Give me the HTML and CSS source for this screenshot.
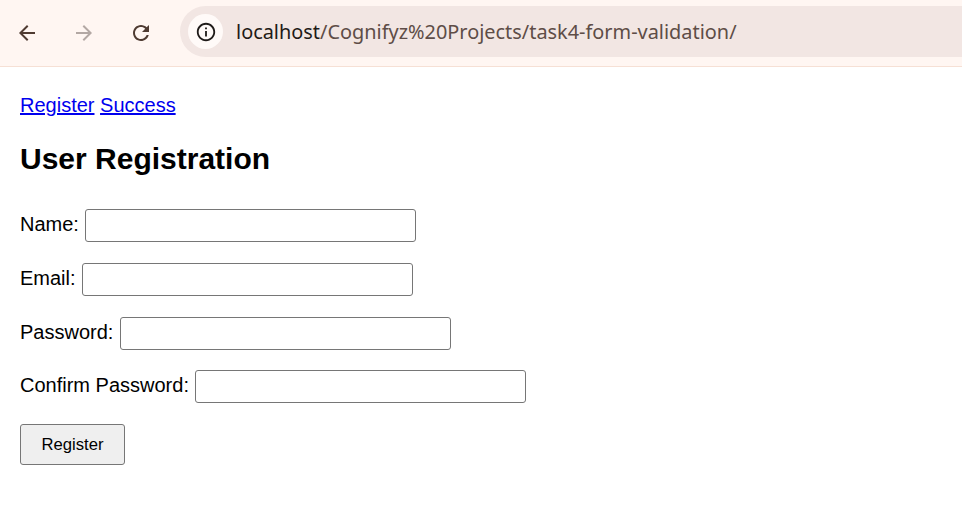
FILE: index.html
```html
<!DOCTYPE html>
<html lang="en">
<head>
<meta charset="utf-8">
<title>User Registration</title>
<link rel="stylesheet" href="styles.css">
</head>
<body>
<div class="chrome">
  <div class="nav-btns">
    <span class="nav-icon">
      <svg viewBox="0 0 24 24" width="24" height="24"><path fill="#4f3b32" d="M20 11H7.83l5.59-5.59L12 4l-8 8 8 8 1.41-1.41L7.83 13H20v-2z"/></svg>
    </span>
    <span class="nav-icon">
      <svg viewBox="0 0 24 24" width="24" height="24"><path fill="#b3a8a4" d="M4 11h12.17l-5.59-5.59L12 4l8 8-8 8-1.41-1.41L16.17 13H4v-2z"/></svg>
    </span>
    <span class="nav-icon">
      <svg viewBox="0 0 24 24" width="24" height="24"><path fill="#4f3b32" d="M17.65 6.35C16.2 4.9 14.21 4 12 4c-4.420 0-7.99 3.58-7.99 8s3.57 8 7.99 8c3.73 0 6.84-2.55 7.73-6h-2.08c-.82 2.33-3.04 4-5.65 4-3.31 0-6-2.69-6-6s2.69-6 6-6c1.66 0 3.14.69 4.22 1.78L13 11h7V4l-2.35 2.35z"/></svg>
    </span>
  </div>
  <div class="omnibox">
    <span class="site-info">
      <svg viewBox="0 0 24 24" width="22" height="22"><path fill="#1f1b19" d="M11 7h2v2h-2zm0 4h2v6h-2zm1-9C6.48 2 2 6.48 2 12s4.48 10 10 10 10-4.48 10-10S17.52 2 12 2zm0 18c-4.41 0-8-3.59-8-8s3.59-8 8-8 8 3.59 8 8-3.59 8-8 8z"/></svg>
    </span>
    <span class="url"><span class="host">localhost</span>/Cognifyz%20Projects/task4-form-validation/</span>
  </div>
</div>
<main class="page">
  <nav class="links"><a href="#">Register</a> <a href="#">Success</a></nav>
  <h1 class="title">User Registration</h1>
  <form class="reg-form">
    <div class="row"><label for="name">Name:</label><input id="name" type="text"></div>
    <div class="row"><label for="email">Email:</label><input id="email" type="email"></div>
    <div class="row"><label for="pw">Password:</label><input id="pw" type="password"></div>
    <div class="row"><label for="cpw">Confirm Password:</label><input id="cpw" type="password"></div>
    <div class="row"><button type="button" class="submit">Register</button></div>
  </form>
</main>
</body>
</html>
```
FILE: styles.css
```css
html, body {
  margin: 0;
  padding: 0;
  background: #ffffff;
}

.chrome {
  height: 66px;
  background: #fff6f2;
  border-bottom: 1px solid #f6e0d5;
  display: flex;
  align-items: center;
}

.nav-btns {
  display: flex;
  align-items: center;
  padding-left: 15px;
  gap: 33px;
  width: 165px;
}

.nav-icon {
  width: 24px;
  height: 24px;
  display: flex;
}

.omnibox {
  flex: 1;
  height: 51px;
  margin-top: -3px;
  background: #f2e6e3;
  border-radius: 26px 0 0 26px;
  display: flex;
  align-items: center;
  padding-left: 8px;
}

.site-info {
  width: 35px;
  height: 35px;
  border-radius: 50%;
  background: #fffaf8;
  display: flex;
  align-items: center;
  justify-content: center;
}

.url {
  margin-left: 13px;
  font-family: "Noto Sans", "Open Sans", sans-serif;
  font-size: 19.9px;
  color: #5e4d47;
  white-space: nowrap;
}

.host {
  color: #1f1a17;
}

.page {
  padding: 27px 20px 0;
  font-family: "Liberation Sans", Arial, sans-serif;
  font-size: 20px;
  color: #000;
}

.links {
  line-height: 23px;
}

.links a {
  color: #0000ee;
}

.title {
  margin: 25px 0 0;
  font-size: 30px;
  line-height: 34px;
  font-weight: bold;
}

.reg-form {
  margin-top: 33px;
  display: flex;
  flex-direction: column;
  gap: 20.75px;
}

.row {
  display: flex;
  align-items: center;
  gap: 6.5px;
}

.row label {
  line-height: 23px;
  padding-bottom: 2px;
}

.row input {
  box-sizing: border-box;
  width: 331px;
  height: 33px;
  border: 1.5px solid #767676;
  border-radius: 3px;
  background: #fff;
  font-family: "Liberation Sans", Arial, sans-serif;
  font-size: 16px;
  margin: 0;
}

.submit {
  box-sizing: border-box;
  width: 105px;
  height: 41px;
  background: #efefef;
  border: 1.5px solid #767676;
  border-radius: 3px;
  font-family: "Liberation Sans", Arial, sans-serif;
  font-size: 16.67px;
  color: #000;
  padding: 0;
}
```
